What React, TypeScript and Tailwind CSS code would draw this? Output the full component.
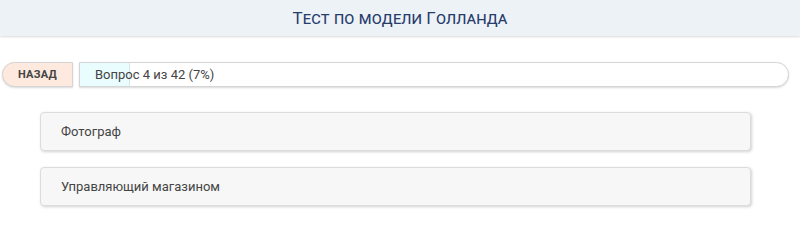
import { useState } from 'react'

const answers = ['Фотограф', 'Управляющий магазином']

export default function App() {
  const [current] = useState(4)
  const total = 42
  const percent = Math.round((current / total) * 100) - 3

  return (
    <div className="min-h-[251px] bg-white font-['Roboto',sans-serif]">
      {/* Header */}
      <header className="h-9 bg-[#edf2f7] shadow-[0_1px_2px_rgba(0,0,0,0.15)] flex items-center justify-center">
        <h1 className="text-[17px] leading-none text-[#283c6c] [font-variant:small-caps] tracking-[0.1px]">
          Тест по модели Голланда
        </h1>
      </header>

      {/* Progress */}
      <div className="mt-[26px] pl-[2px] pr-[11px] flex items-center gap-[6px]">
        <button className="w-[71px] h-[25px] flex items-center justify-center leading-none rounded-l-full bg-[#fde9dd] border border-[#d5d5d5] shadow-[0_1px_2px_rgba(0,0,0,0.15)] text-[11px] font-bold text-[#444] uppercase tracking-[0.3px]">
          назад
        </button>
        <div className="relative flex-1 h-[25px] rounded-r-full bg-white border border-[#d5d5d5] shadow-[0_1px_2px_rgba(0,0,0,0.15)] overflow-hidden">
          <div className="absolute inset-y-0 left-0 bg-[#eafdfe] border-r border-[#d9e6e6]" style={{ width: `${percent}%` }} />
          <span className="relative flex h-full items-center pl-[15px] text-[13px] text-[#444]">
            Вопрос {current} из {total} (7%)
          </span>
        </div>
      </div>

      {/* Answers */}
      <div className="mt-[25px] ml-[40px] w-[711px] flex flex-col gap-[16px]">
        {answers.map((a) => (
          <div
            key={a}
            className="h-[39px] flex items-center px-[20px] rounded-[4px] bg-[#f7f7f7] border border-[#dcdcdc] shadow-[1px_1px_3px_rgba(0,0,0,0.18)] text-[13px] text-[#444]"
          >
            {a}
          </div>
        ))}
      </div>
    </div>
  )
}
